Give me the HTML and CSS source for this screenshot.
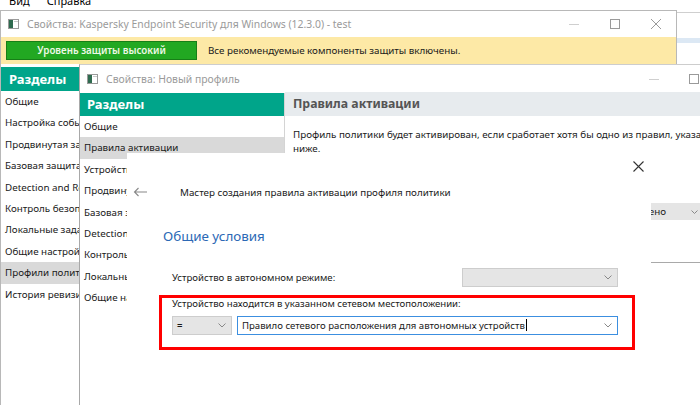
FILE: index.html
```html
<!DOCTYPE html>
<html lang="ru">
<head>
    <meta charset="UTF-8">
    <title>Свойства: Kaspersky Endpoint Security для Windows</title>
    <link rel="stylesheet" href="styles.css">
</head>
<body>
<div class="desktop">

<div class="menubar">
    <span>Вид</span>
    <span>Справка</span>
</div>

<div class="backapp">
    <div class="backapp-top"></div>
    <div class="backapp-band"></div>
    <div class="backapp-bottom"></div>
</div>

<!-- окно свойств программы -->
<div class="window win-main">
    <div class="titlebar">
        <svg class="app-icon" width="11" height="10" viewBox="0 0 11 10">
            <rect x="0.5" y="0.5" width="10" height="9" fill="#fff" stroke="#9a9a9a"/>
            <rect x="1" y="1" width="4" height="8" fill="#2f6b4f"/>
            <rect x="6" y="2" width="4" height="1" fill="#c9c9c9"/>
        </svg>
        <span class="title">Свойства: Kaspersky Endpoint Security для Windows (12.3.0) - test</span>
        <div class="controls">
            <span class="ctl"><svg width="10" height="10" viewBox="0 0 10 10"><path d="M0 5.5h10" stroke="#cfcfcf"/></svg></span>
            <span class="ctl"><svg width="10" height="10" viewBox="0 0 10 10"><rect x="0.5" y="0.5" width="9" height="9" fill="none" stroke="#9a9a9a"/></svg></span>
            <span class="ctl"><svg width="10" height="10" viewBox="0 0 10 10"><path d="M0 0L10 10M10 0L0 10" stroke="#9a9a9a"/></svg></span>
        </div>
    </div>
    <div class="status">
        <div class="status-badge">Уровень защиты высокий</div>
        <span class="status-text">Все рекомендуемые компоненты защиты включены.</span>
    </div>
    <div class="sections sections-main">
        <div class="sections-head">Разделы</div>
        <ul>
            <li>Общие</li>
            <li>Настройка событий</li>
            <li>Продвинутая защита</li>
            <li>Базовая защита</li>
            <li>Detection and Response</li>
            <li>Контроль безопасности</li>
            <li>Локальные задачи</li>
            <li>Общие настройки</li>
            <li class="active">Профили политики</li>
            <li>История ревизий</li>
        </ul>
    </div>
</div>

<!-- окно нового профиля -->
<div class="window win-profile">
    <div class="titlebar tall">
        <svg class="app-icon" width="11" height="10" viewBox="0 0 11 10">
            <rect x="0.5" y="0.5" width="10" height="9" fill="#fff" stroke="#9a9a9a"/>
            <rect x="1" y="1" width="4" height="8" fill="#2f6b4f"/>
            <rect x="6" y="2" width="4" height="1" fill="#c9c9c9"/>
        </svg>
        <span class="title">Свойства: Новый профиль</span>
        <div class="controls narrow">
            <span class="ctl"><svg width="10" height="10" viewBox="0 0 10 10"><path d="M0 5.5h10" stroke="#cfcfcf"/></svg></span>
            <span class="ctl"><svg width="10" height="10" viewBox="0 0 10 10"><rect x="0.5" y="0.5" width="9" height="9" fill="none" stroke="#9a9a9a"/></svg></span>
            <span class="ctl"><svg width="10" height="10" viewBox="0 0 10 10"><path d="M0 0L10 10M10 0L0 10" stroke="#9a9a9a"/></svg></span>
        </div>
    </div>
    <div class="profile-body">
        <div class="sections sections-profile">
            <div class="sections-head">Разделы</div>
            <ul>
                <li>Общие</li>
                <li class="active">Правила активации</li>
                <li>Устройства</li>
                <li>Продвинутая защита</li>
                <li>Базовая защита</li>
                <li>Detection and Response</li>
                <li>Контроль безопасности</li>
                <li>Локальные задачи</li>
                <li>Общие настройки</li>
            </ul>
        </div>
        <div class="page">
            <div class="page-head">Правила активации</div>
            <p class="page-text">Профиль политики будет активирован, если сработает хотя бы одно из правил, указанных<br>ниже.</p>
            <div class="page-row">
                <span class="page-label">Состояние профиля:</span>
                <div class="combo combo-state">
                    <span>Включено</span>
                    <svg width="7" height="4" viewBox="0 0 7 4"><path d="M0.5 0.5L3.5 3.5L6.5 0.5" fill="none" stroke="#888"/></svg>
                </div>
            </div>
            <div class="rules"></div>
        </div>
    </div>
</div>

<!-- мастер -->
<div class="dialog">
    <div class="dialog-top">
        <span class="dialog-close"><svg width="11" height="11" viewBox="0 0 11 11"><path d="M0.5 0.5L10.5 10.5M10.5 0.5L0.5 10.5" stroke="#333" stroke-width="1.1"/></svg></span>
    </div>
    <div class="dialog-head">
        <svg class="back" width="14" height="10" viewBox="0 0 14 10"><path d="M14 5H1.5M5.5 1L1.5 5L5.5 9" fill="none" stroke="#888" stroke-width="1.1"/></svg>
        <span class="dialog-title">Мастер создания правила активации профиля политики</span>
    </div>
    <h2 class="dialog-caption">Общие условия</h2>

    <div class="cond-row">
        <span>Устройство в автономном режиме:</span>
        <div class="combo combo-off">
            <span></span>
            <svg width="8" height="5" viewBox="0 0 8 5"><path d="M0.5 0.5L4 4L7.5 0.5" fill="none" stroke="#888"/></svg>
        </div>
    </div>

    <div class="cond-box">
        <div class="cond-label">Устройство находится в указанном сетевом местоположении:</div>
        <div class="cond-fields">
            <div class="combo combo-op">
                <span>=</span>
                <svg width="8" height="5" viewBox="0 0 8 5"><path d="M0.5 0.5L4 4L7.5 0.5" fill="none" stroke="#888"/></svg>
            </div>
            <div class="combo combo-rule">
                <span>Правило сетевого расположения для автономных устройств<i class="caret"></i></span>
                <svg width="8" height="5" viewBox="0 0 8 5"><path d="M0.5 0.5L4 4L7.5 0.5" fill="none" stroke="#888"/></svg>
            </div>
        </div>
    </div>
</div>

</div>
</body>
</html>
```

FILE: styles.css
```css
* {
    box-sizing: border-box;
}

body {
    margin: 0;
    font-family: "Noto Sans", "Segoe UI", sans-serif;
    font-size: 9.8px;
    color: #1a1a1a;
    background: #fff;
}

.desktop {
    position: relative;
    width: 700px;
    height: 405px;
    overflow: hidden;
    background: #fff;
}

.menubar {
    position: absolute;
    left: 9px;
    top: -6px;
    display: flex;
    gap: 17px;
    font-size: 11px;
    line-height: 14px;
    color: #000;
}

.backapp {
    position: absolute;
    left: 677px;
    top: 0;
    width: 30px;
    height: 405px;
}

.backapp-top {
    margin-top: 12px;
    border-top: 1px solid #cfcfcf;
}

.backapp-band {
    margin-top: 25px;
    height: 5px;
    background: #dce8f4;
}

.backapp-bottom {
    margin-top: 21px;
    border-top: 1px solid #cfcfcf;
}

/* окна */
.window {
    position: absolute;
    background: #fff;
}

.win-main {
    left: 0;
    top: 10px;
    width: 677px;
    height: 400px;
    border: 1px solid #b8b8b8;
}

.win-profile {
    left: 79px;
    top: 64px;
    width: 675px;
    height: 360px;
    border-left: 1px solid #a8a8a8;
    border-top: 1px solid #cdcdcd;
}

.titlebar {
    height: 26px;
    display: flex;
    align-items: center;
    padding-left: 7px;
}

.titlebar.tall {
    height: 28px;
}

.app-icon {
    flex-shrink: 0;
}

.title {
    margin-left: 8px;
    font-size: 10.4px;
    color: #9a9a9a;
    white-space: nowrap;
}

.controls {
    margin-left: auto;
    display: flex;
}

.ctl {
    width: 41px;
    display: flex;
    justify-content: center;
    align-items: center;
}

.controls.narrow .ctl {
    width: 40px;
}

.status {
    height: 27px;
    background: #fde9a6;
    display: flex;
    align-items: center;
    padding-left: 5px;
}

.status-badge {
    width: 191px;
    height: 19px;
    line-height: 17px;
    background: #22a822;
    border: 1px solid #177f17;
    color: #eef8e6;
    text-align: center;
    font-weight: 600;
}

.status-text {
    margin-left: 11px;
}

/* разделы */
.sections {
    width: 205px;
}

.sections-main {
    margin-top: 3px;
}

.sections-head {
    height: 24px;
    line-height: 24px;
    padding-left: 8px;
    background: #00a58a;
    color: #fff;
    font-size: 13px;
    font-weight: bold;
}

.sections-profile .sections-head {
    height: 23px;
    line-height: 23px;
    padding-left: 7px;
}

.sections ul {
    list-style: none;
    margin: 0;
    padding: 0;
}

.sections li {
    height: 21.4px;
    line-height: 21.4px;
    padding-left: 4px;
    white-space: nowrap;
    overflow: hidden;
}

.sections li.active {
    background: #d9d9d9;
}

.profile-body {
    display: flex;
    height: 100%;
}

.sections-profile {
    border-right: 1px solid #d4d4d4;
    flex-shrink: 0;
}

.page {
    flex: 1;
}

.page-head {
    height: 24px;
    line-height: 24px;
    padding-left: 8px;
    background: #e7ebee;
    color: #555;
    font-size: 12.3px;
    font-weight: bold;
    margin-top: -1px;
}

.page-text {
    margin: 12px 8px 0;
    line-height: 14px;
    white-space: nowrap;
}

.page-row {
    display: flex;
    align-items: center;
    margin: 47px 8px 0;
}

.page-label {
    width: 321px;
    flex-shrink: 0;
}

.combo {
    display: flex;
    align-items: center;
    justify-content: space-between;
    padding: 0 5px 0 4px;
    border: 1px solid #cdcdcd;
    background: #e5e5e5;
    white-space: nowrap;
}

.combo-state {
    width: 89px;
    height: 17px;
    border: none;
    flex-shrink: 0;
}

.rules {
    margin: 42px 8px 0 0;
    border-top: 1px solid #a9a9a9;
}

/* мастер */
.dialog {
    position: absolute;
    left: 127px;
    top: 153px;
    width: 524px;
    height: 260px;
    background: #fff;
}

.dialog-top {
    height: 26px;
    display: flex;
    justify-content: flex-end;
}

.dialog-close {
    width: 26px;
    display: flex;
    justify-content: center;
    align-items: center;
}

.dialog-head {
    display: flex;
    align-items: center;
    height: 22px;
    margin-top: 2px;
    padding-left: 6px;
}

.dialog-title {
    margin-left: 33px;
}

.dialog-caption {
    margin: 23px 0 0 36px;
    font-size: 13.4px;
    line-height: 20px;
    font-weight: normal;
    color: #2c69b5;
}

.cond-row {
    display: flex;
    align-items: center;
    justify-content: space-between;
    height: 19px;
    margin-top: 22px;
    padding: 0 33px 0 45px;
    font-size: 9.6px;
}

.combo-off {
    width: 156px;
    height: 19px;
}

.cond-box {
    width: 476px;
    height: 55px;
    margin: 8px 0 0 32px;
    border: 3px solid #ff0000;
    padding: 0 0 0 10px;
    font-size: 9.6px;
}

.cond-label {
    line-height: 12px;
}

.cond-fields {
    display: flex;
    gap: 5px;
    margin-top: 6px;
}

.combo-op {
    width: 60px;
    height: 19px;
    font-weight: 600;
}

.combo-rule {
    width: 381px;
    height: 19px;
    background: #fff;
    border-color: #3c8fe0;
}

.caret {
    display: inline-block;
    width: 1px;
    height: 12px;
    margin-left: 1px;
    vertical-align: -2px;
    background: #000;
}
```
